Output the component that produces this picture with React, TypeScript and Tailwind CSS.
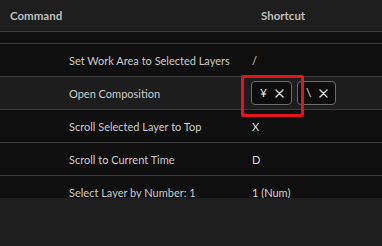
type Row = {
    command: string;
    keys: string[];
    chips?: boolean;
    selected?: boolean;
};

const rows: Row[] = [
    { command: 'Set Work Area to Selected Layers', keys: ['/'] },
    { command: 'Open Composition', keys: ['¥', '\\'], chips: true, selected: true },
    { command: 'Scroll Selected Layer to Top', keys: ['X'] },
    { command: 'Scroll to Current Time', keys: ['D'] },
    { command: 'Select Layer by Number: 1', keys: ['1 (Num)'] },
];

function Cross() {
    return (
        <svg width="9" height="9" viewBox="0 0 9 9" className="text-[#dcdcdc]">
            <path d="M1 1 L8 8 M8 1 L1 8" stroke="currentColor" strokeWidth="1.4" strokeLinecap="round" />
        </svg>
    );
}

function Chip({ label }: { label: string }) {
    return (
        <div className="flex h-[24px] items-center gap-[8px] rounded-[4px] border border-[#6a6a6a] bg-[#0c0c0c] pl-[8px] pr-[7px] text-[12px] text-[#e6e6e6]">
            <span className="leading-none">{label}</span>
            <Cross />
        </div>
    );
}

export default function App() {
    return (
        <div
            className="flex h-[246px] w-[382px] flex-col overflow-hidden bg-[#1e1e1e]"
            style={{ fontFamily: 'Lato, "Liberation Sans", sans-serif' }}
        >
            <div className="flex h-[32px] shrink-0 items-center border-b border-[#3c3c3c] bg-[#1e1e1e] text-[11.5px] font-bold text-[#bdbdbd]">
                <div className="w-[261px] pl-[10px]">Command</div>
                <div>Shortcut</div>
            </div>

            <div className="h-[166px] shrink-0 overflow-hidden bg-[#0f0f0f]">
                <div className="h-[12px] border-b border-[#3a3a3a]" />
                {rows.map((row) => (
                    <div
                        key={row.command}
                        className={`relative flex h-[33px] items-center border-b border-[#3a3a3a] text-[11px] text-[#c9c9c9] ${
                            row.selected ? 'bg-[#1d1d1d]' : ''
                        }`}
                    >
                        <div className="w-[251px] pl-[69px] pt-[2px]">{row.command}</div>
                        {row.chips ? (
                            <div className="flex items-center gap-[5px]">
                                {row.keys.map((k) => (
                                    <Chip key={k} label={k} />
                                ))}
                            </div>
                        ) : (
                            <div className="pl-[1px] pt-[2px] text-[#d6d6d6]">{row.keys[0]}</div>
                        )}
                        {row.selected && (
                            <div className="pointer-events-none absolute left-[241px] top-[-2px] h-[42px] w-[63px] rounded-[2px] border-[3px] border-[#e3141b]" />
                        )}
                    </div>
                ))}
            </div>

            <div className="flex-1 bg-[#1e1e1e]" />
        </div>
    );
}
